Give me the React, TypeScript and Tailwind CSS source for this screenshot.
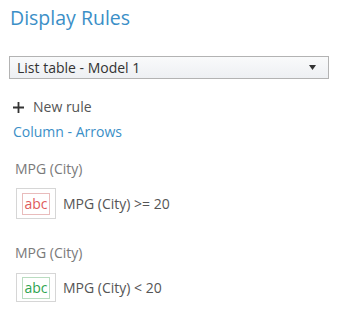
export default function App() {
  return (
    <div className="w-[337px] h-[312px] bg-white" style={{ fontFamily: '"Open Sans", "Noto Sans", sans-serif' }}>
      <div className="pl-[9px] pr-[8px] pt-[5px]">
        <div className="text-[19.5px] leading-[26px] text-[#3b8fc7] pl-[1px]">Display Rules</div>
        <div className="mt-[25px] h-[23px] w-[320px] border border-[#b3b3b3] bg-gradient-to-b from-[#f9fafb] to-[#eef0f3] flex items-center justify-between pl-[7px] pr-[12px]">
          <span className="text-[14px] text-[#333] leading-none">List table - Model 1</span>
          <svg width="7" height="5" viewBox="0 0 7 5"><path d="M0 0h7L3.5 5z" fill="#333" /></svg>
        </div>
        <div className="mt-[19px] flex items-center pl-[4px] h-[18px]">
          <svg width="11" height="11" viewBox="0 0 11 11"><path d="M5.5 0v11M0 5.5h11" stroke="#333" strokeWidth="1.8" /></svg>
          <span className="ml-[9px] text-[14px] text-[#555] leading-none">New rule</span>
        </div>
        <div className="mt-[7px] pl-[4px] text-[14px] leading-[18px] text-[#3b8fc7]">Column - Arrows</div>
        <div className="mt-[19px] pl-[6px] text-[14px] leading-[18px] text-[#7a7a7a]">MPG (City)</div>
        <div className="mt-[10px] flex items-center pl-[7px]">
          <div className="w-[40px] h-[31px] border border-[#d6d6d6] flex items-center justify-center">
            <div className="w-[28px] h-[22px] border border-[#e9bcbc] flex items-center justify-center text-[14px] text-[#e05a5a] leading-none">abc</div>
          </div>
          <span className="ml-[7px] text-[14px] text-[#555] leading-none">MPG (City) &gt;= 20</span>
        </div>
        <div className="mt-[25px] pl-[6px] text-[14px] leading-[18px] text-[#7a7a7a]">MPG (City)</div>
        <div className="mt-[11px] flex items-center pl-[7px]">
          <div className="w-[40px] h-[29px] border border-[#d6d6d6] flex items-center justify-center">
            <div className="w-[28px] h-[22px] border border-[#b9dcc0] flex items-center justify-center text-[14px] text-[#2ea44f] leading-none">abc</div>
          </div>
          <span className="ml-[7px] text-[14px] text-[#555] leading-none">MPG (City) &lt; 20</span>
        </div>
      </div>
    </div>
  );
}
